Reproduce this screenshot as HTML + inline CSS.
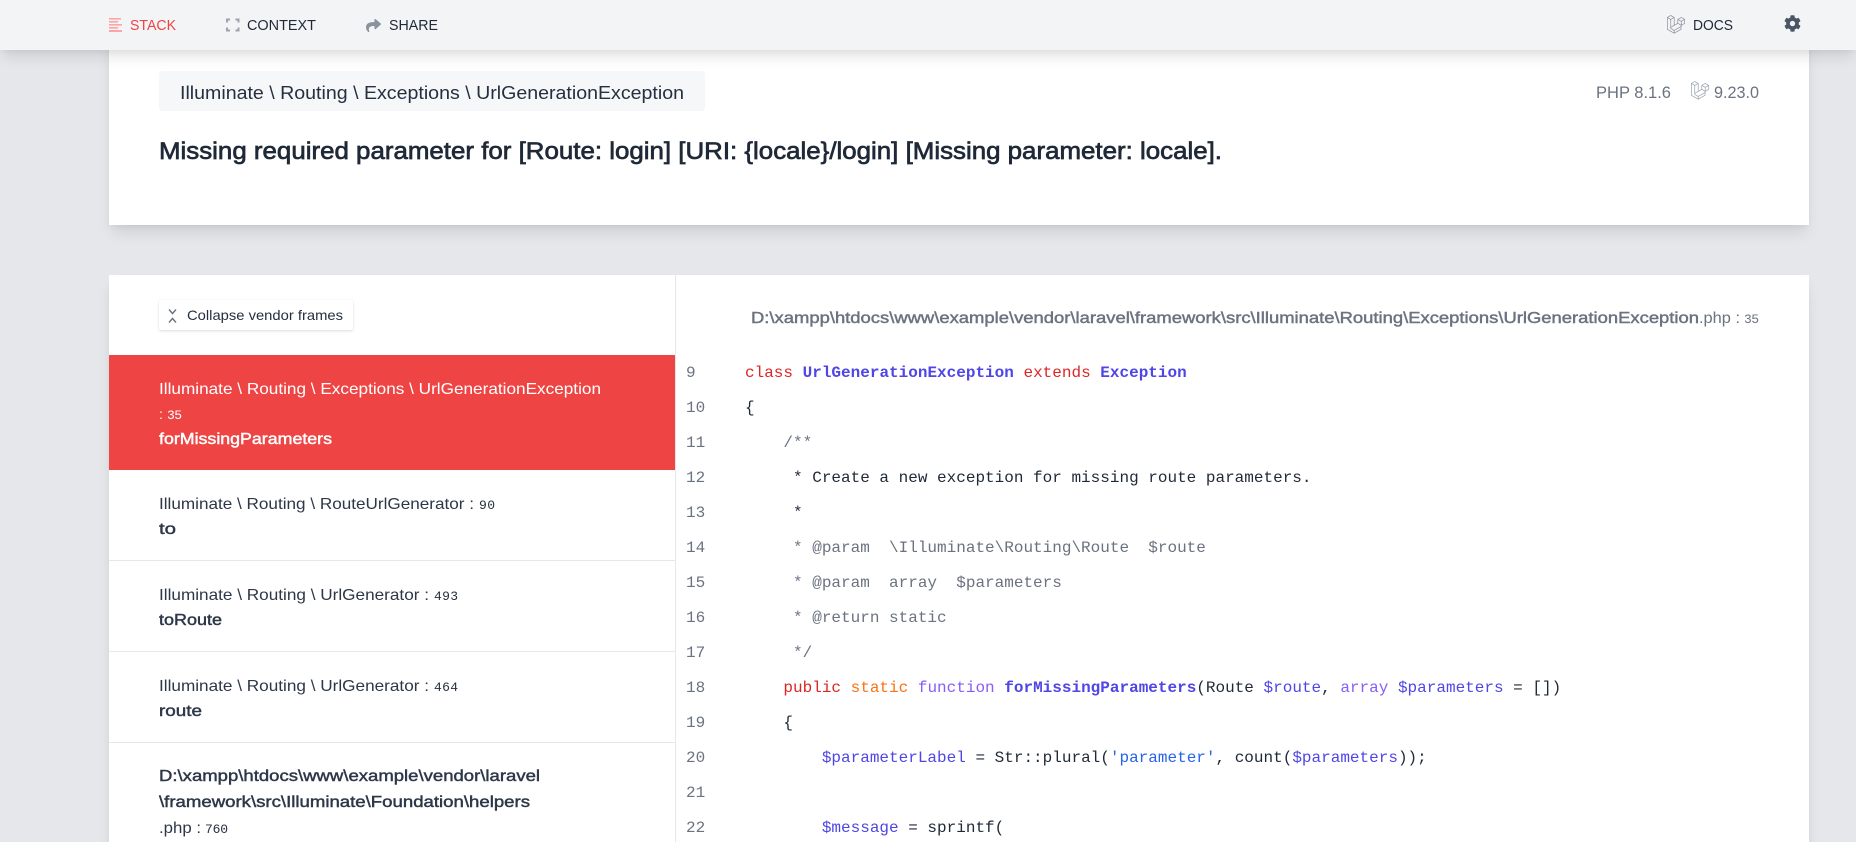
<!DOCTYPE html>
<html lang="en">
<head>
<meta charset="utf-8">
<title>Missing required parameter</title>
<style>
html,body{margin:0;padding:0;width:1856px;height:842px;overflow:hidden;background:#e5e7eb}
body{position:relative;font-family:"Liberation Sans",sans-serif}
.abs{position:absolute}
#card1{left:109px;top:30px;width:1700px;height:195px;background:#fff;box-shadow:0 10px 15px -3px rgba(0,0,0,.1),0 4px 6px -2px rgba(0,0,0,.05)}
#chip{left:159px;top:71px;width:546px;height:40px;background:#f6f7f9;border-radius:3px}
#card2{left:109px;top:275px;width:1700px;height:600px;background:#fff;box-shadow:0 10px 15px -3px rgba(0,0,0,.1),0 4px 6px -2px rgba(0,0,0,.05)}
#divider{left:675px;top:275px;width:1px;height:567px;background:#e5e7eb}
#btn{left:159px;top:300px;width:194px;height:30px;background:#fff;border-radius:2px;box-shadow:0 1px 3px 0 rgba(0,0,0,.1),0 1px 2px 0 rgba(0,0,0,.05)}
#red{left:109px;top:355px;width:566px;height:115px;background:#ef4444}
.sep{left:109px;width:566px;height:1px;background:#e5e7eb}
#nav{left:0;top:0;width:1856px;height:50px;background:#f3f4f6;box-shadow:0 10px 15px -3px rgba(0,0,0,.1),0 4px 6px -2px rgba(0,0,0,.05)}
#ov{left:0;top:0;width:1856px;height:842px}
text{white-space:pre}
.sans{font-family:"Liberation Sans",sans-serif}
.mono{font-family:"Liberation Mono",monospace;font-size:16px}
.nv{font-size:14.5px;fill:#1f2937}
.fr{font-size:16px;fill:#2d3748}
.b{stroke:currentColor;stroke-width:.45px}
.mn{font-family:"Liberation Mono",monospace;font-size:13px}
.ln{fill:#6b7280}
.c{fill:#6b7280}
.k{fill:#dc2626}
.o{fill:#f97316}
.p{fill:#8b5cf6}
.i{fill:#4f46e5;font-weight:700}
.v{fill:#4f46e5}
.s{fill:#2563eb}
.t{fill:#1f2937}
</style>
</head>
<body>
<div class="abs" id="card1"></div>
<div class="abs" id="chip"></div>
<div class="abs" id="card2"></div>
<div class="abs" id="divider"></div>
<div class="abs" id="btn"></div>
<div class="abs" id="red"></div>
<div class="abs sep" style="top:560px"></div>
<div class="abs sep" style="top:651px"></div>
<div class="abs sep" style="top:742px"></div>
<div class="abs" id="nav"></div>

<svg class="abs" id="ov" xmlns="http://www.w3.org/2000/svg" viewBox="0 0 1856 842">
<defs>
<g id="lv" fill="none" stroke-width="2" stroke-linejoin="round" stroke-linecap="round">
<path d="M10.4 1 L1 6.4 V39.2 L19.9 50.2 L39 39.2 V28.3"/>
<path d="M1 6.4 L10.4 11.8 L20 6.4 L10.4 1"/>
<path d="M10.4 11.8 V37 L19.9 42.6 L39 31.6"/>
<path d="M20 6.4 V28.4 L10.4 33.8"/>
<path d="M19.9 42.6 V50.2"/>
<path d="M30 11.8 L39.6 6.3 L49.2 11.8 V22.7 L39.6 28.3 L30 22.8 Z"/>
<path d="M30 11.8 L39.6 17.3 L49.2 11.8 M39.6 17.3 V28.3 M30 22.8 L20 28.4"/>
</g>
</defs>

<!-- nav -->
<g fill="#fca5a5">
<rect x="109" y="18" width="12" height="1.6"/>
<rect x="109" y="21" width="9" height="1.6"/>
<rect x="109" y="24" width="13" height="1.6"/>
<rect x="109" y="27" width="9" height="1.6"/>
<rect x="109" y="30" width="13" height="2"/>
</g>
<text class="sans nv" x="130" y="30" textLength="46" lengthAdjust="spacingAndGlyphs" style="fill:#ef4444">STACK</text>
<path d="M227 22.5V19.5H230M235.500 19.5H238.500V22.500M238.500 27.500V30.500H235.500M230 30.500H227V27.500" fill="none" stroke="#9ca3af" stroke-width="2"/>
<text class="sans nv" x="247" y="30" textLength="69" lengthAdjust="spacingAndGlyphs">CONTEXT</text>
<svg x="366" y="18" width="15" height="15" viewBox="0 0 512 512"><path fill="#8b929e" d="M503.691 189.836L327.687 37.851C312.281 24.546 288 35.347 288 56.015v80.053C127.371 137.907 0 170.1 0 322.326c0 61.441 39.581 122.309 83.333 154.132 13.653 9.931 33.111-2.533 28.077-18.631C66.066 312.814 132.917 274.316 288 272.085V360c0 20.7 24.3 31.453 39.687 18.164l176.004-152c11.071-9.562 11.086-26.753 0-36.328z"/></svg>
<text class="sans nv" x="389" y="30" textLength="49" lengthAdjust="spacingAndGlyphs">SHARE</text>
<svg x="1667" y="15" width="18" height="19" viewBox="0 0 50 52"><use href="#lv" stroke="#8b929e"/></svg>
<text class="sans nv" x="1693" y="30" textLength="40" lengthAdjust="spacingAndGlyphs">DOCS</text>
<svg x="1784" y="15" width="17" height="17" viewBox="0 0 512 512"><path fill="#4b5563" d="M487.4 315.7l-42.6-24.6c4.3-23.2 4.3-47 0-70.2l42.6-24.6c4.9-2.8 7.1-8.6 5.5-14-11.1-35.6-30-67.8-54.7-94.6-3.8-4.1-10-5.1-14.8-2.3L380.8 110c-17.9-15.4-38.5-27.3-60.8-35.1V25.800c0-5.600-3.900-10.500-9.400-11.700-36.700-8.200-74.300-7.800-109.200 0-5.500 1.200-9.400 6.100-9.400 11.700V75c-22.200 7.900-42.800 19.800-60.800 35.100L88.700 85.500c-4.900-2.800-11-1.900-14.800 2.300-24.700 26.700-43.600 58.900-54.700 94.600-1.700 5.400.6 11.200 5.500 14L67.300 221c-4.300 23.200-4.300 47 0 70.200l-42.600 24.600c-4.900 2.800-7.100 8.600-5.500 14 11.100 35.600 30 67.800 54.700 94.600 3.800 4.100 10 5.100 14.800 2.300l42.600-24.600c17.900 15.400 38.500 27.300 60.800 35.100v49.200c0 5.600 3.900 10.500 9.400 11.700 36.700 8.200 74.300 7.800 109.200 0 5.500-1.200 9.400-6.100 9.400-11.700v-49.200c22.200-7.900 42.800-19.800 60.800-35.100l42.600 24.600c4.900 2.800 11 1.900 14.800-2.300 24.700-26.700 43.600-58.900 54.700-94.600 1.500-5.500-.7-11.300-5.600-14.100zM256 336c-44.100 0-80-35.900-80-80s35.900-80 80-80 80 35.900 80 80-35.900 80-80 80z"/></svg>

<!-- header card -->
<text class="sans" x="180" y="99" font-size="18" fill="#252f3f" textLength="504" lengthAdjust="spacingAndGlyphs">Illuminate \ Routing \ Exceptions \ UrlGenerationException</text>
<text class="sans b" x="159" y="159" font-size="24" fill="#1f2937" color="#1f2937" style="stroke-width:.7px" textLength="1063" lengthAdjust="spacingAndGlyphs">Missing required parameter for [Route: login] [URI: {locale}/login] [Missing parameter: locale].</text>
<text class="sans" x="1596" y="98" font-size="17" fill="#6b7280" textLength="75" lengthAdjust="spacingAndGlyphs">PHP 8.1.6</text>
<svg x="1691" y="81" width="18" height="19" viewBox="0 0 50 52"><use href="#lv" stroke="#9ca3af"/></svg>
<text class="sans" x="1714" y="98" font-size="17" fill="#6b7280" textLength="45" lengthAdjust="spacingAndGlyphs">9.23.0</text>

<!-- collapse button -->
<path d="M169 309.500L172.500 313.500L176 309.500M169 322.500L172.500 318.500L176 322.500" fill="none" stroke="#6b7280" stroke-width="1.400"/>
<text class="sans" x="187" y="320" font-size="14" fill="#252f3f" textLength="156" lengthAdjust="spacingAndGlyphs">Collapse vendor frames</text>

<!-- frames -->
<text class="sans fr" x="159" y="394" textLength="442" lengthAdjust="spacingAndGlyphs" style="fill:#fff">Illuminate \ Routing \ Exceptions \ UrlGenerationException</text>
<text class="sans" x="159" y="419" font-size="14" fill="#fff">:</text>
<text class="mn" x="167" y="419" fill="#fff" textLength="15">35</text>
<text class="sans fr b" x="159" y="444" color="#fff" textLength="173" lengthAdjust="spacingAndGlyphs" style="fill:#fff">forMissingParameters</text>

<text class="sans fr" x="159" y="509" textLength="315" lengthAdjust="spacingAndGlyphs">Illuminate \ Routing \ RouteUrlGenerator :</text>
<text class="mn" x="479" y="509" fill="#252f3f" textLength="16">90</text>
<text class="sans fr b" x="159" y="534" color="#2d3748" textLength="17" lengthAdjust="spacingAndGlyphs">to</text>

<text class="sans fr" x="159" y="600" textLength="270" lengthAdjust="spacingAndGlyphs">Illuminate \ Routing \ UrlGenerator :</text>
<text class="mn" x="434" y="600" fill="#252f3f" textLength="24">493</text>
<text class="sans fr b" x="159" y="625" color="#2d3748" textLength="63" lengthAdjust="spacingAndGlyphs">toRoute</text>

<text class="sans fr" x="159" y="691" textLength="270" lengthAdjust="spacingAndGlyphs">Illuminate \ Routing \ UrlGenerator :</text>
<text class="mn" x="434" y="691" fill="#252f3f" textLength="24">464</text>
<text class="sans fr b" x="159" y="716" color="#2d3748" textLength="43" lengthAdjust="spacingAndGlyphs">route</text>

<text class="sans fr b" x="159" y="781" color="#2d3748" textLength="381" lengthAdjust="spacingAndGlyphs">D:\xampp\htdocs\www\example\vendor\laravel</text>
<text class="sans fr b" x="159" y="807" color="#2d3748" textLength="371" lengthAdjust="spacingAndGlyphs">\framework\src\Illuminate\Foundation\helpers</text>
<text class="sans fr" x="159" y="833" textLength="42" lengthAdjust="spacingAndGlyphs">.php :</text>
<text class="mn" x="205" y="833" fill="#252f3f" textLength="23">760</text>

<!-- file path -->
<text class="sans b" x="751" y="323" font-size="16" fill="#6b7280" color="#6b7280" textLength="948" lengthAdjust="spacingAndGlyphs">D:\xampp\htdocs\www\example\vendor\laravel\framework\src\Illuminate\Routing\Exceptions\UrlGenerationException</text>
<text class="sans" x="1699" y="323" font-size="16" fill="#6b7280" textLength="41" lengthAdjust="spacingAndGlyphs">.php :</text>
<text class="mn" x="1744" y="323" fill="#6b7280" textLength="15">35</text>

<!-- code -->
<g class="mono ln">
<text x="686" y="377">9</text>
<text x="686" y="412">10</text>
<text x="686" y="447">11</text>
<text x="686" y="482">12</text>
<text x="686" y="517">13</text>
<text x="686" y="552">14</text>
<text x="686" y="587">15</text>
<text x="686" y="622">16</text>
<text x="686" y="657">17</text>
<text x="686" y="692">18</text>
<text x="686" y="727">19</text>
<text x="686" y="762">20</text>
<text x="686" y="797">21</text>
<text x="686" y="832">22</text>
</g>
<g class="mono">
<text x="745" y="377" class="t"><tspan class="k">class</tspan> <tspan class="i">UrlGenerationException</tspan> <tspan class="k">extends</tspan> <tspan class="i">Exception</tspan></text>
<text x="745" y="412" class="t">{</text>
<text x="745" y="447" class="c">    /**</text>
<text x="745" y="482" class="t">     * Create a new exception for missing route parameters.</text>
<text x="745" y="517" class="t">     *</text>
<text x="745" y="552" class="c">     * @param  \Illuminate\Routing\Route  $route</text>
<text x="745" y="587" class="c">     * @param  array  $parameters</text>
<text x="745" y="622" class="c">     * @return static</text>
<text x="745" y="657" class="c">     */</text>
<text x="745" y="692" class="t">    <tspan class="k">public</tspan> <tspan class="o">static</tspan> <tspan class="p">function</tspan> <tspan class="i">forMissingParameters</tspan>(Route <tspan class="v">$route</tspan>, <tspan class="p">array</tspan> <tspan class="v">$parameters</tspan> = [])</text>
<text x="745" y="727" class="t">    {</text>
<text x="745" y="762" class="t">        <tspan class="v">$parameterLabel</tspan> = Str::plural(<tspan class="s">'parameter'</tspan>, count(<tspan class="v">$parameters</tspan>));</text>
<text x="745" y="832" class="t">        <tspan class="v">$message</tspan> = sprintf(</text>
</g>
</svg>
</body>
</html>
